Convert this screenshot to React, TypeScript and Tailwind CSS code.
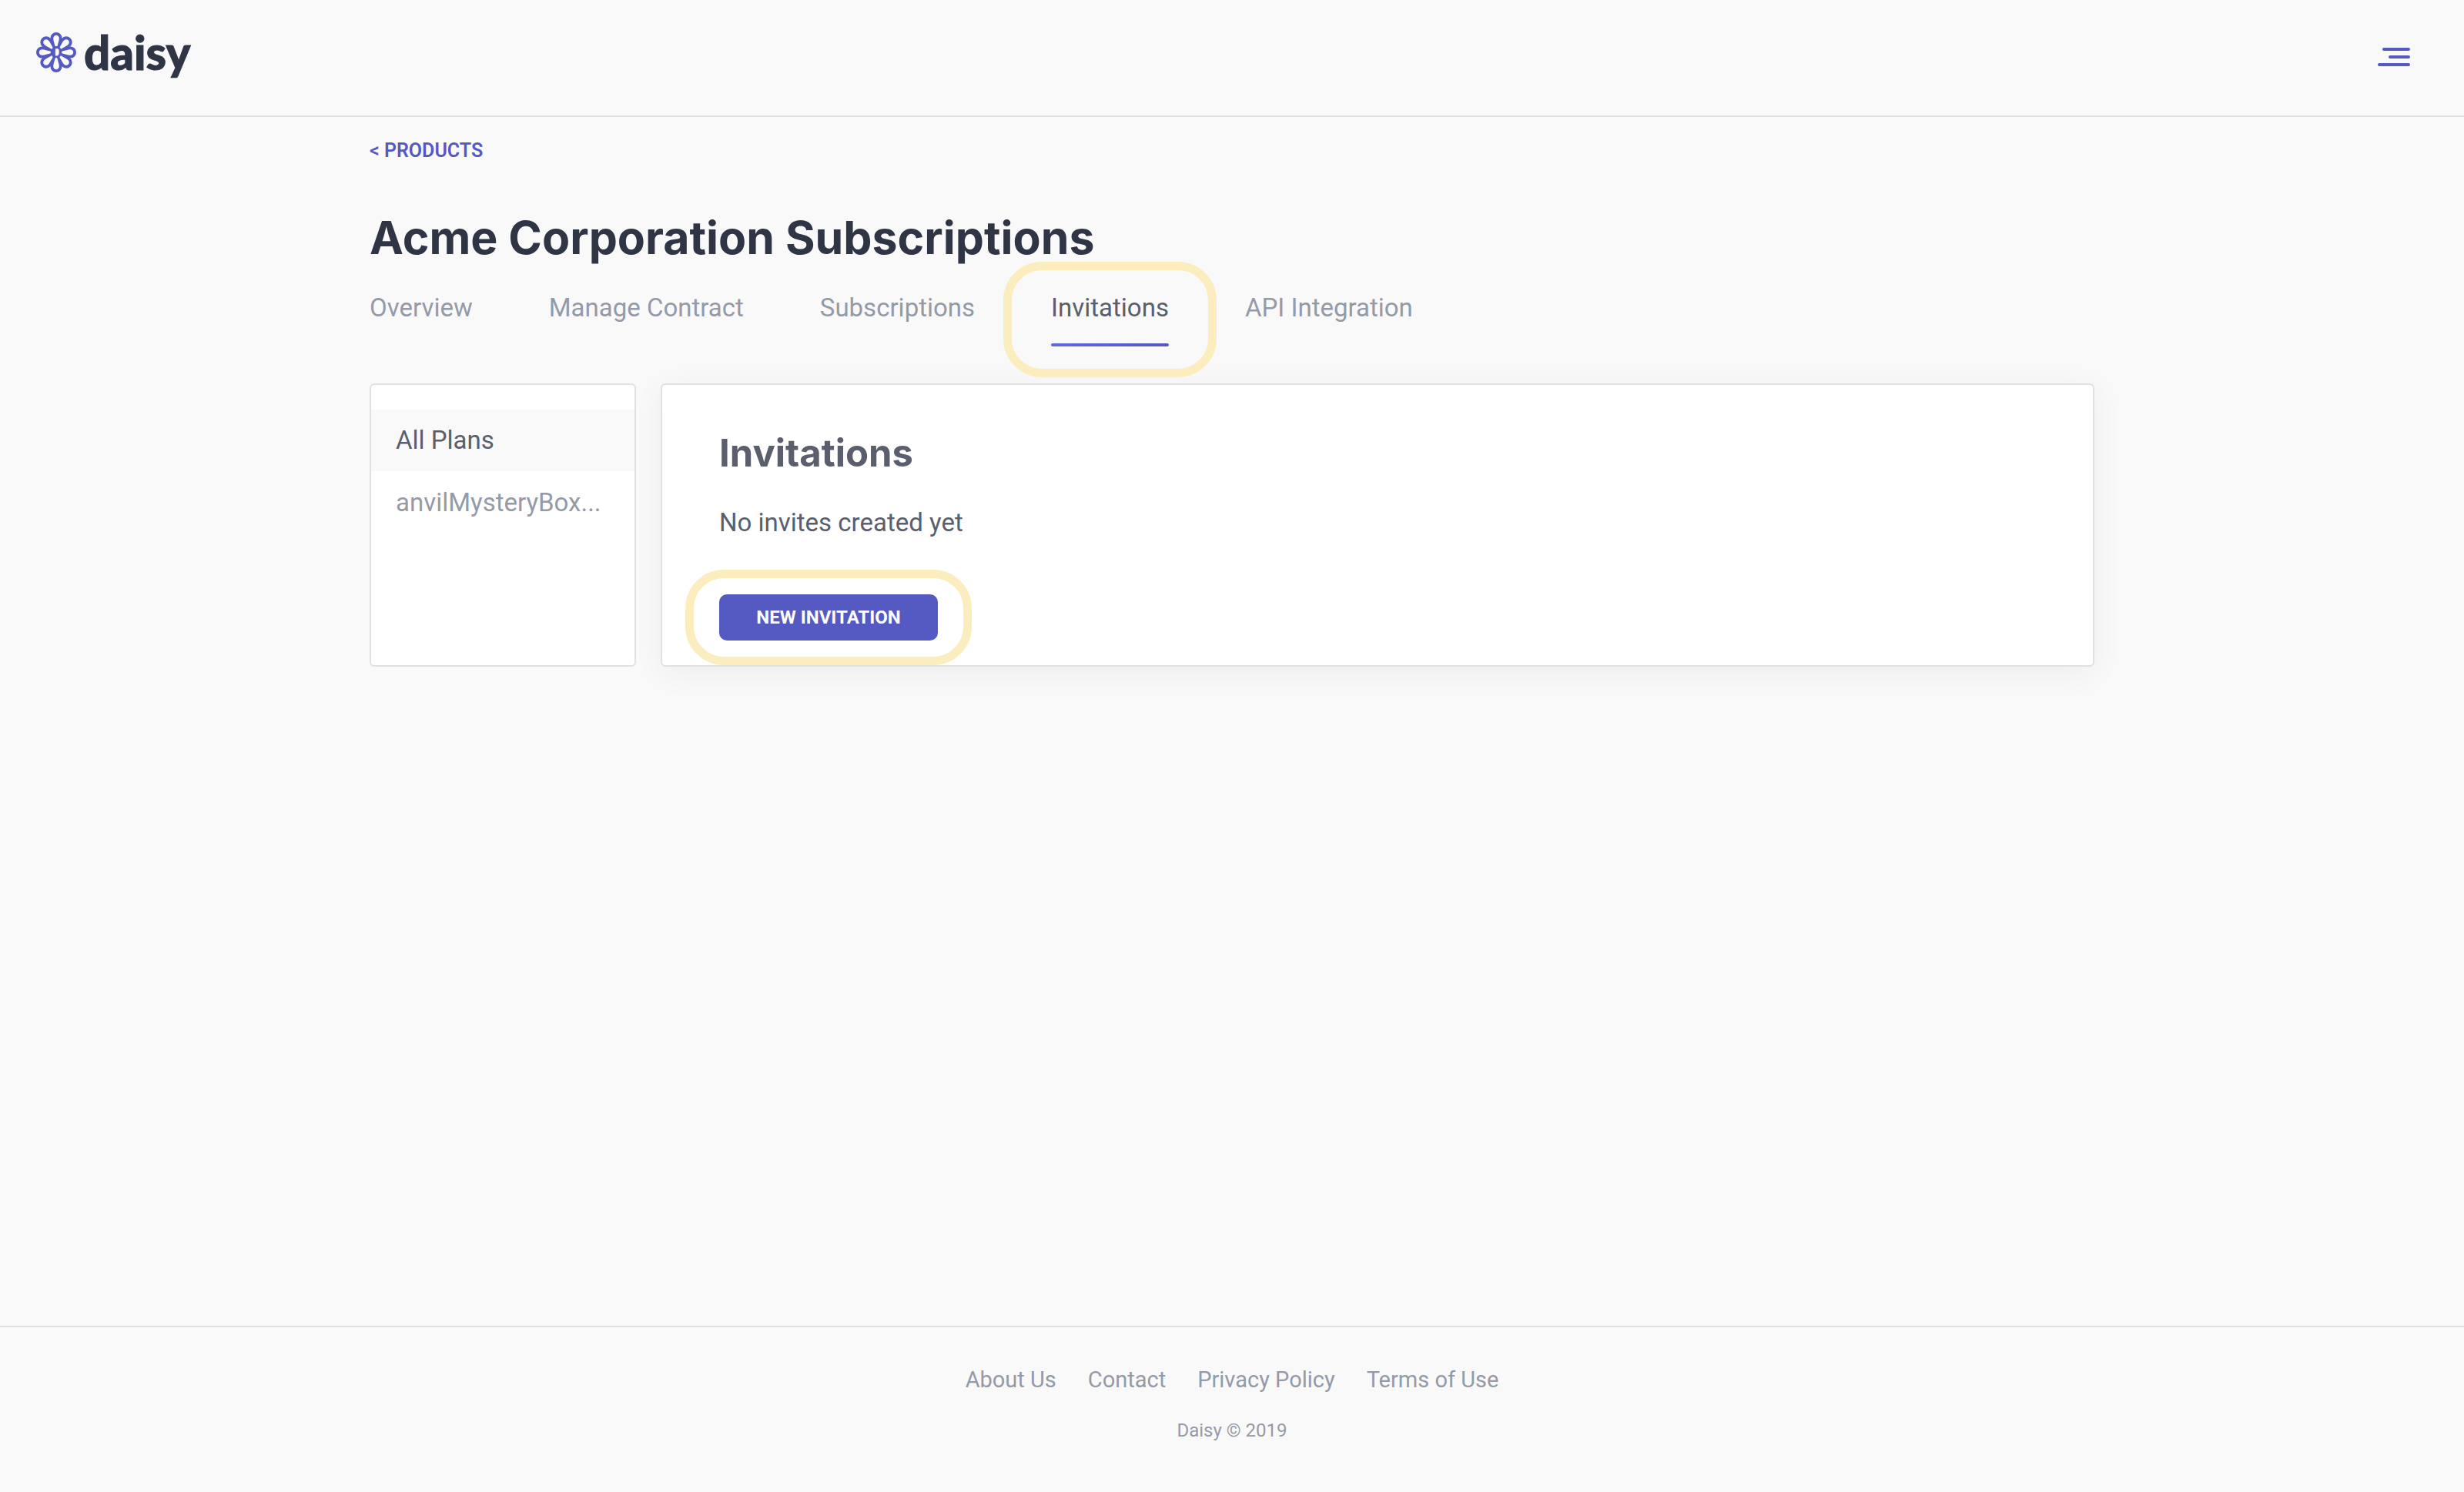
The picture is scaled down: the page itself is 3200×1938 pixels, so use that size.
const petals = [0, 45, 90, 135, 180, 225, 270, 315];
const petalPath = "M0 -3 C-2 -8 -5.6 -13 -5.6 -18.2 C-5.6 -21.6 -3.2 -24 0 -24 C3.2 -24 5.6 -21.6 5.6 -18.2 C5.6 -13 2 -8 0 -3 Z";

function DaisyMark() {
  return (
    <svg width="52" height="52" viewBox="-26 -26 52 52" aria-hidden="true">
      {petals.map((angle) => (
        <path key={angle} d={petalPath} transform={`rotate(${angle})`} fill="#545ac1" stroke="#545ac1" strokeWidth="4" />
      ))}
      {petals.map((angle) => (
        <path
          key={angle}
          d="M0 -7 C-1.4 -7 -1.6 -8 -2 -10 C-2.6 -13 -3.8 -15 -3.8 -18 C-3.8 -20.6 -2.1 -22.2 0 -22.2 C2.1 -22.2 3.8 -20.6 3.8 -18 C3.8 -15 2.6 -13 2 -10 C1.6 -8 1.4 -7 0 -7 Z"
          transform={`rotate(${angle})`}
          fill="#f9f9f9"
        />
      ))}
      <circle cx="1" r="5" fill="#f9f9f9" />
      <text x="1" y="7" textAnchor="middle" fontFamily="Roboto, sans-serif" fontWeight="700" fontSize="20" fill="#545ac1">
        D
      </text>
    </svg>
  );
}

function Header() {
  return (
    <header className="flex h-[152px] items-start justify-between border-b-2 border-[#e0e0e6] pr-[70px] pl-[47px]">
      <a href="#home" className="mt-9 flex items-center gap-2.5">
        <DaisyMark />
        <span className="font-['Lato',sans-serif] text-[60px] leading-[64px] font-black text-[#303546] [-webkit-text-stroke:1px_#303546]">
          daisy
        </span>
      </a>
      <button type="button" aria-label="Open menu" className="mt-[62px] flex flex-col items-end gap-1.5">
        <span className="h-1 w-9 rounded-full bg-[#545ac1]" />
        <span className="h-1 w-7 rounded-full bg-[#545ac1]" />
        <span className="h-1 w-[42px] rounded-full bg-[#545ac1]" />
      </button>
    </header>
  );
}

const tabs = ["Overview", "Manage Contract", "Subscriptions", "Invitations", "API Integration"];

function Tabs() {
  return (
    <nav aria-label="Product sections" className="mt-9 flex gap-[99px] text-[33px] leading-10 text-[#959aa8]">
      {tabs.map((tab) =>
        tab === "Invitations" ? (
          <a key={tab} href="#invitations" aria-current="page" className="relative text-[#5a5e6d]">
            {tab}
            <span className="mt-[26px] block h-1 rounded-xs bg-linear-to-r from-[#6268da] to-[#545ac1]" />
            <span className="pointer-events-none absolute -inset-x-[62px] -inset-y-10 rounded-[50px] border-[11px] border-[#fcedbf]" />
          </a>
        ) : (
          <a key={tab} href="#section">
            {tab}
          </a>
        ),
      )}
    </nav>
  );
}

function PlanList() {
  return (
    <aside className="w-[346px] shrink-0 rounded-md border-2 border-[#e0e0e6] bg-white pt-8 text-[33px] leading-[80px]">
      <a href="#all-plans" className="block bg-[#f9f9f9] px-8 text-[#5a5e6d]">
        All Plans
      </a>
      <a href="#plan" className="mt-px block px-8 text-[#959aa8]">
        anvilMysteryBox...
      </a>
    </aside>
  );
}

function InvitationsPanel() {
  return (
    <section className="flex-1 rounded-md border-2 border-[#e0e0e6] bg-white px-[74px] pt-[59px] pb-8 text-[#5a5e6d] shadow-[0_8px_40px_rgba(0,0,0,0.05)]">
      <h2 className="font-['Inter',sans-serif] text-[49px] leading-[60px] font-bold">Invitations</h2>
      <p className="mt-10 text-[33px] leading-10">No invites created yet</p>
      <div className="relative mt-[73px] w-fit">
        <button type="button" className="block h-[60px] w-[284px] rounded-[10px] bg-[#545ac1] text-2xl font-bold text-white">
          NEW INVITATION
        </button>
        <span className="pointer-events-none absolute -inset-x-11 -inset-y-8 rounded-[50px] border-[11px] border-[#fcedbf]" />
      </div>
    </section>
  );
}

const footerLinks = ["About Us", "Contact", "Privacy Policy", "Terms of Use"];

function Footer() {
  return (
    <footer className="flex flex-col items-center border-t-2 border-[#e0e0e6] pt-12 pb-16 text-[#959aa8]">
      <nav aria-label="Footer" className="flex gap-[41px] text-[29px] leading-10">
        {footerLinks.map((label) => (
          <a key={label} href="#footer">
            {label}
          </a>
        ))}
      </nav>
      <p className="mt-[30px] text-2xl">Daisy © 2019</p>
    </footer>
  );
}

export default function App() {
  return (
    <div className="flex min-h-screen flex-col bg-[#f9f9f9] font-['Roboto',sans-serif]">
      <Header />
      <main className="mx-auto w-[70%] flex-1 pt-[29px]">
        <a href="#products" className="block w-fit text-[25px] leading-[30px] font-semibold text-[#545ac1]">
          &lt; PRODUCTS
        </a>
        <h1 className="mt-[63px] font-['Inter',sans-serif] text-[59px] leading-[70px] font-bold text-[#303546]">
          Acme Corporation Subscriptions
        </h1>
        <Tabs />
        <div className="mt-12 flex gap-8">
          <PlanList />
          <InvitationsPanel />
        </div>
      </main>
      <Footer />
    </div>
  );
}
